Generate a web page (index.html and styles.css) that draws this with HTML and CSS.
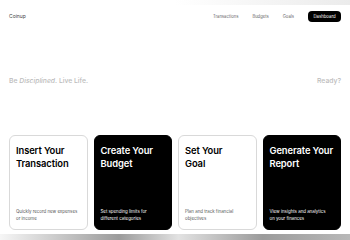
FILE: index.html
```html
<!DOCTYPE html>
<html lang="en">
<head>
  <meta charset="UTF-8" />
  <meta name="viewport" content="width=device-width, initial-scale=1.0"/>
  <title>Coinup</title>
  <link rel="stylesheet" href="styles.css">
</head>
<body>
  <div class="top-strip"></div>
  <header class="site-header">
    <span class="brand">Coinup</span>
    <nav class="header-nav">
      <a href="#" class="nav-link">Transactions</a>
      <a href="#" class="nav-link">Budgets</a>
      <a href="#" class="nav-link">Goals</a>
      <a href="#" class="nav-btn">Dashboard</a>
    </nav>
  </header>

  <section class="tagline">
    <span>Be <em>Disciplined</em>. Live Life.</span>
    <span>Ready?</span>
  </section>

  <section class="cards">
    <div class="card card-light">
      <h2 class="card-title">Insert Your<br>Transaction</h2>
      <p class="card-text">Quickly record new expenses<br>or income</p>
    </div>
    <div class="card card-dark">
      <h2 class="card-title">Create Your<br>Budget</h2>
      <p class="card-text">Set spending limits for<br>different categories</p>
    </div>
    <div class="card card-light">
      <h2 class="card-title">Set Your<br>Goal</h2>
      <p class="card-text">Plan and track financial<br>objectives</p>
    </div>
    <div class="card card-dark">
      <h2 class="card-title">Generate Your<br>Report</h2>
      <p class="card-text">View insights and analytics<br>on your finances</p>
    </div>
  </section>

  <div class="bottom-strip"></div>
</body>
</html>
```

FILE: styles.css
```css
html, body {
  margin: 0;
  padding: 0;
  background: #fff;
  font-family: 'Inter', 'DejaVu Sans', sans-serif;
  overflow: hidden;
}

.top-strip {
  height: 5px;
  background: linear-gradient(90deg, #fff 0%, #fff 50%, #ebebeb 100%);
}

.site-header {
  display: flex;
  align-items: center;
  justify-content: space-between;
  height: 22px;
  padding: 0 9px;
}
.brand {
  font-size: 5px;
  color: #444;
}
.header-nav {
  display: flex;
  align-items: center;
  gap: 14px;
}
.nav-link {
  font-size: 4.2px;
  color: #666;
  text-decoration: none;
}
.nav-btn {
  display: flex;
  align-items: center;
  justify-content: center;
  width: 33px;
  height: 11px;
  border-radius: 4px;
  background: #000;
  color: #fff;
  font-size: 4.3px;
  text-decoration: none;
}

/* Tagline row */
.tagline {
  display: flex;
  justify-content: space-between;
  align-items: center;
  padding: 0 9px;
  margin-top: 48px;
  height: 10px;
  font-size: 6.8px;
  font-weight: 500;
  color: #bcbcbc;
}

/* Feature cards */
.cards {
  display: grid;
  grid-template-columns: repeat(4, 1fr);
  gap: 6px;
  padding: 0 9px;
  margin-top: 50px;
}
.card {
  display: flex;
  flex-direction: column;
  justify-content: space-between;
  height: 95px;
  box-sizing: border-box;
  padding: 8px 4px 7px 6px;
  border-radius: 6px;
}
.card-light {
  background: #fff;
  border: 1px solid #d9d9d9;
  color: #000;
}
.card-dark {
  background: #000;
  border: 1px solid #000;
  color: #fff;
}
.card-title {
  margin: 0;
  font-size: 9.4px;
  line-height: 13px;
  font-weight: 600;
  letter-spacing: -0.1px;
}
.card-text {
  margin: 0;
  font-size: 4.4px;
  line-height: 6.5px;
}
.card-light .card-text {
  color: #555;
}

.bottom-strip {
  height: 8px;
  margin-top: 4px;
  background: linear-gradient(90deg, #f6f6f6 0%, #9b9b9b 34%, #e2e2e2 51%, #9b9b9b 75%, #b8b8b8 100%);
}
```
